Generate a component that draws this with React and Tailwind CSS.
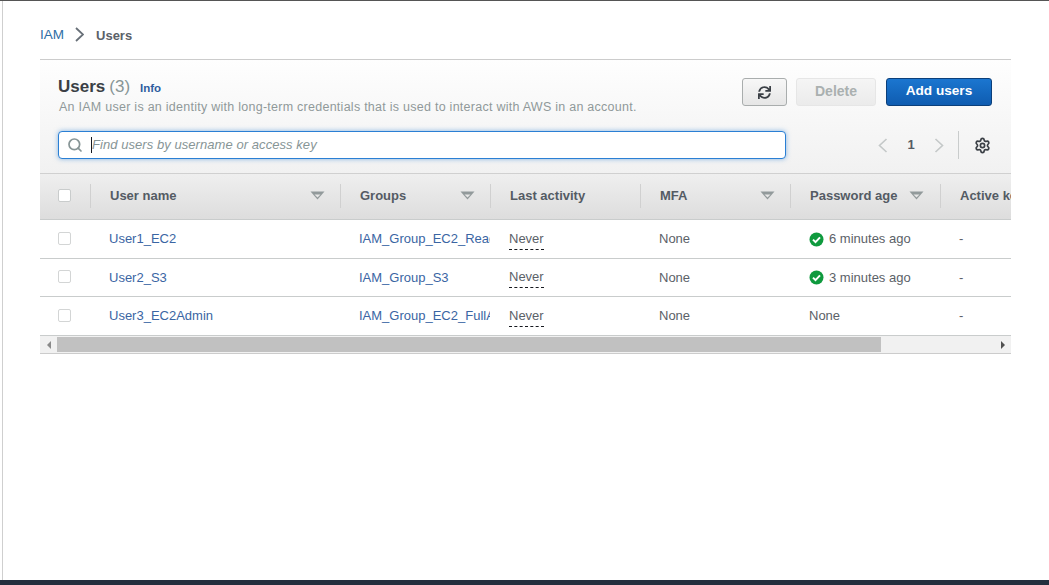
import { Search, Settings } from 'lucide-react';
import { FaSync } from 'react-icons/fa';

const users = [
  { name: 'User1_EC2', group: 'IAM_Group_EC2_ReadOnly', age: '6 minutes ago', rowH: 'h-[39px]' },
  { name: 'User2_S3', group: 'IAM_Group_S3', age: '3 minutes ago', rowH: 'h-[38px]' },
  { name: 'User3_EC2Admin', group: 'IAM_Group_EC2_FullAccess', age: null, rowH: 'h-[39px]' },
];

function SortCaret() {
  return (
    <svg width="15" height="9" viewBox="0 0 15 9" className="shrink-0">
      <path d="M0.5 0.5h14L7.5 8.5z" fill="#929a9b" />
      <path d="M4.5 3.5h6L7.5 6.4z" fill="#e6e6e6" />
    </svg>
  );
}

function Chevron({ dir = 'right', color, width = 9, height = 15, stroke = 1.6 }) {
  const d = dir === 'right' ? 'M1 1l7 6.5L1 14' : 'M8 1L1 7.5 8 14';
  return (
    <svg width={width} height={height} viewBox="0 0 9 15" className="shrink-0">
      <path d={d} fill="none" stroke={color} strokeWidth={stroke} />
    </svg>
  );
}

function HeadCell({ label, caret, width = 'w-[150px]', caretClass = 'ml-auto mr-[15px]' }) {
  return (
    <div className={`${width} shrink-0 h-[24px] flex items-center pl-[19px] border-l border-[#d0d0d0] whitespace-nowrap`}>
      <span>{label}</span>
      {caret && <span className={`${caretClass} flex`}><SortCaret /></span>}
    </div>
  );
}

function Row({ user }) {
  return (
    <div className={`${user.rowH} flex items-center border-b border-[#c9cccc] text-[13px] text-[#5b6168]`}>
      <div className="w-[50px] shrink-0 pl-[18px] -mt-[2px]">
        <div className="w-[13px] h-[13px] border border-[#d3d5d5] rounded-[2px]"></div>
      </div>
      <div className="w-[250px] shrink-0 pl-[19px] text-[#3a65a3]">{user.name}</div>
      <div className="w-[150px] shrink-0 pl-[19px] text-[#3a65a3] overflow-hidden whitespace-nowrap">{user.group}</div>
      <div className="w-[150px] shrink-0 pl-[19px]">
        <span className="inline-block border-b border-dashed border-[#16191f] leading-[16px] pb-[2px] -mt-[1px]">Never</span>
      </div>
      <div className="w-[150px] shrink-0 pl-[19px]">None</div>
      <div className="w-[150px] shrink-0 pl-[19px] flex items-center gap-[5px]">
        {user.age ? (
          <>
            <svg width="15" height="15" viewBox="0 0 15 15" className="shrink-0">
              <circle cx="7.5" cy="7.5" r="7" fill="#0f9a3e" />
              <path d="M4 7.6l2.5 2.5L11 5.4" fill="none" stroke="#fff" strokeWidth="2" />
            </svg>
            {user.age}
          </>
        ) : 'None'}
      </div>
      <div className="w-[150px] shrink-0 pl-[19px]">-</div>
    </div>
  );
}

export default function App() {
  return (
    <div className="h-[585px] flex flex-col bg-white font-['Liberation_Sans',Arial,sans-serif] overflow-hidden">
      <div className="h-px bg-[#555]"></div>
      <div className="flex-1 ml-[2px] border-l border-[#cfcfcf] pl-[37px] pr-[38px] min-h-0">
        {/* Breadcrumb */}
        <div className="h-[58px] pt-[25px] flex items-start text-[14px] leading-[18px]">
          <span className="text-[#2f6ea5] text-[13.5px]">IAM</span>
          <span className="ml-[11px] mr-[12px] mt-[1px] flex"><Chevron color="#687078" stroke={1.8} /></span>
          <span className="font-bold text-[#5b6168] text-[13px] mt-px">Users</span>
        </div>

        {/* Panel */}
        <div className="border-t border-[#ccc]">
          <div className="h-[113px] bg-gradient-to-b from-[#fefefe] to-[#f1f1f1] pl-[18px] pr-[19px]">
            <div className="flex items-start justify-between pt-[18px]">
              <div>
                <div className="flex items-baseline h-[20px] -mt-[1px]">
                  <h1 className="text-[17px] leading-[20px] font-bold text-[#3a3f45]">Users</h1>
                  <span className="text-[17px] leading-[20px] text-[#879596] ml-[4px]">(3)</span>
                  <span className="text-[11.5px] font-bold text-[#2f5d9f] ml-[10px]">Info</span>
                </div>
                <p className="text-[12.5px] leading-[17px] text-[#90999a] mt-[2px] tracking-[0.26px] pl-px">
                  An IAM user is an identity with long-term credentials that is used to interact with AWS in an account.
                </p>
              </div>
              <div className="flex items-center">
                <button className="w-[45px] h-[28px] mr-[9px] flex items-center justify-center border border-[#a9adad] rounded-[3px] bg-gradient-to-b from-[#f7f7f7] to-[#e6e6e6]">
                  <FaSync size={13} className="text-[#3a3f45]" />
                </button>
                <button className="w-[80px] h-[28px] mr-[10px] pb-px border border-[#e6e6e6] rounded-[3px] bg-gradient-to-b from-[#f5f5f5] to-[#ebebeb] text-[14px] font-bold text-[#aab0b0]">
                  Delete
                </button>
                <button className="w-[106px] h-[28px] pb-px border border-[#0b3f7a] rounded-[3px] bg-gradient-to-b from-[#1b76d0] to-[#0f5cb0] text-[13.6px] font-bold text-white">
                  Add users
                </button>
              </div>
            </div>
            <div className="flex items-center mt-[15px]">
              <div className="w-[728px] h-[28px] flex items-center border border-[#2a7fd4] rounded-[4px] bg-white shadow-[0_0_5px_rgba(42,127,212,0.55)]">
                <Search size={16} strokeWidth={2.6} className="text-[#879596] ml-[8px]" />
                <span className="ml-[8px] h-[16px] border-l border-[#16191f]"></span>
                <span className="italic text-[13px] text-[#879596] tracking-[0.06px]">Find users by username or access key</span>
              </div>
              <div className="ml-auto flex items-center">
                <Chevron dir="left" color="#c4c8c8" width={10} height={15} />
                <span className="w-[46px] text-center text-[13px] font-bold text-[#545b64]">1</span>
                <Chevron color="#c4c8c8" width={10} height={15} />
                <span className="h-[28px] border-l border-[#c9cccc] ml-[14px] mr-[15px]"></span>
                <Settings size={17} strokeWidth={2.4} className="text-[#3a3f45] mr-px" />
              </div>
            </div>
          </div>

          {/* Table */}
          <div className="overflow-hidden">
            <div className="w-[1100px]">
              <div className="h-[47px] flex items-center pb-[2px] border-t border-[#d0d0d0] border-b border-b-[#c9cccc] bg-gradient-to-b from-[#efefef] to-[#dddddd] text-[13px] font-bold text-[#545b64]">
                <div className="w-[50px] shrink-0 pl-[18px]">
                  <div className="w-[13px] h-[13px] border border-[#c9cccc] bg-white rounded-[2px]"></div>
                </div>
                <HeadCell label="User name" caret width="w-[250px]" />
                <HeadCell label="Groups" caret />
                <HeadCell label="Last activity" />
                <HeadCell label="MFA" caret />
                <HeadCell label="Password age" caret caretClass="ml-[12px]" />
                <HeadCell label="Active key age" />
              </div>
              {users.map(u => <Row key={u.name} user={u} />)}
            </div>
          </div>

          {/* Scrollbar */}
          <div className="h-[18px] flex bg-[#f1f1f1] border-b border-[#ccc]">
            <div className="w-[17px] flex items-center justify-center">
              <span className="border-y-[4px] border-y-transparent border-r-[4px] border-r-[#8a8a8a]"></span>
            </div>
            <div className="w-[824px] bg-[#c1c1c1] my-[1px]"></div>
            <div className="flex-1"></div>
            <div className="w-[17px] flex items-center justify-center">
              <span className="border-y-[4px] border-y-transparent border-l-[4px] border-l-[#505050]"></span>
            </div>
          </div>
        </div>
      </div>
      <div className="h-[5px] bg-[#232f3e]"></div>
    </div>
  );
}
